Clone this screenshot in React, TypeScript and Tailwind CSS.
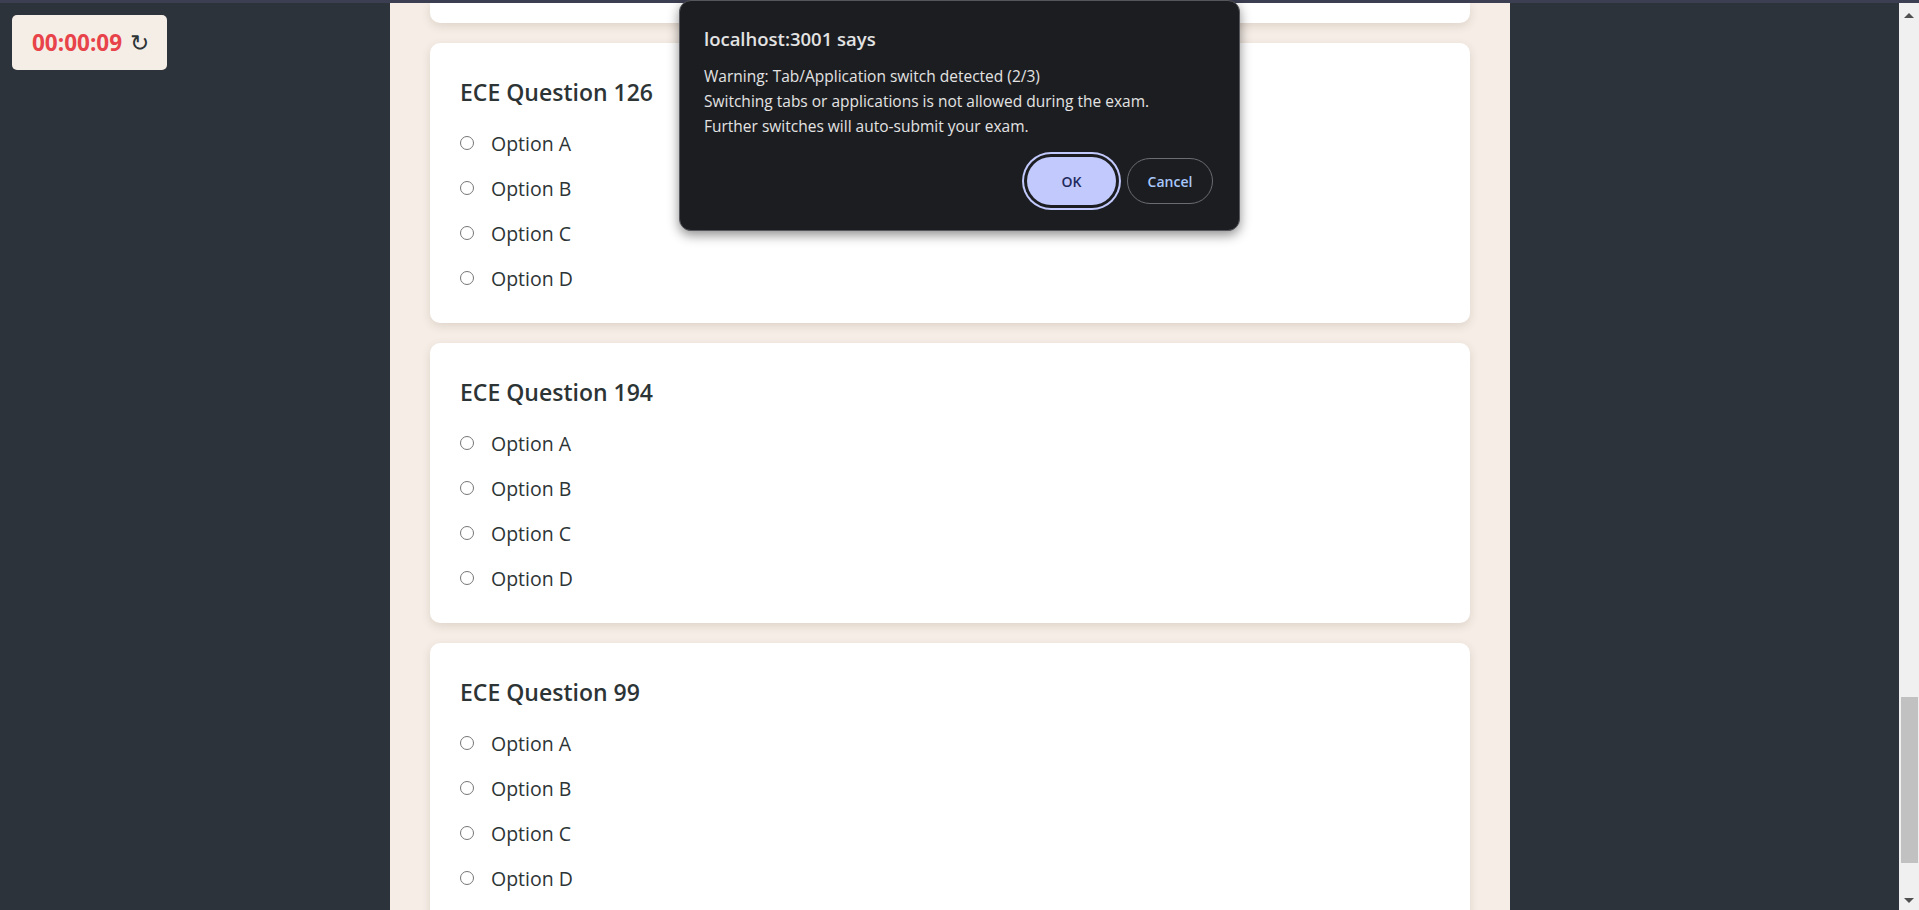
import React from 'react'

const questions = ['ECE Question 126', 'ECE Question 194', 'ECE Question 99']
const options = ['Option A', 'Option B', 'Option C', 'Option D']

const QuestionCard = ({ title }: { title: string }) => {
  return (
    <div className="shrink-0 h-[280px] rounded-[10px] bg-white px-[30px] pt-[29px] pb-[22px] shadow-[0_3px_8px_rgba(120,100,80,0.18)]">
      <h3 className="h-10 leading-10 text-[23px] font-semibold text-[#2d3436] mb-[9px]">{title}</h3>
      <div className="flex flex-col">
        {options.map((o) => (
          <label key={o} className="flex items-center h-[45px] gap-[17px]">
            <span className="w-[14px] h-[14px] rounded-full border border-[#767676] bg-white -mt-[2px]" />
            <span className="text-[19.5px] text-[#2d3436]">{o}</span>
          </label>
        ))}
      </div>
    </div>
  )
}

const Scrollbar = () => {
  return (
    <div className="w-[20px] shrink-0 bg-[#f0f0f0] flex flex-col items-center">
      <div className="mt-[10px] w-0 h-0 border-l-[5px] border-r-[5px] border-b-[5px] border-l-transparent border-r-transparent border-b-[#505050]" />
      <div className="mt-[679px] ml-[2px] mr-[1px] self-stretch h-[166px] bg-[#c1c1c1]" />
      <div className="mt-[35px] w-0 h-0 border-l-[5px] border-r-[5px] border-t-[5px] border-l-transparent border-r-transparent border-t-[#505050]" />
    </div>
  )
}

const App = () => {
  return (
    <div className="relative h-[910px] w-[1919px] overflow-hidden bg-[#2c333a] flex flex-col font-['Open_Sans',sans-serif]">
      <div className="h-[3px] shrink-0 bg-[#3c3e51]" />
      <div className="flex flex-1 min-h-0">
        <div className="w-[390px] shrink-0 pl-3 pt-3">
          <div className="w-[155px] h-[55px] rounded-[5px] bg-[#f5eee6] flex items-center pl-5 gap-2">
            <span className="text-[22.5px] font-bold text-[#e8434a]">00:00:09</span>
            <span className="text-[23px] text-[#2d3436]">↻</span>
          </div>
        </div>
        <main className="w-[1120px] shrink-0 bg-[#f5ede6] px-10 flex flex-col gap-5 overflow-hidden">
          {/* tail of the previous question, scrolled out of view */}
          <div className="shrink-0 h-5 rounded-b-[10px] bg-white shadow-[0_3px_8px_rgba(120,100,80,0.18)]" />
          {questions.map((q) => (
            <QuestionCard key={q} title={q} />
          ))}
        </main>
        <div className="flex-1" />
        <Scrollbar />
      </div>

      {/* browser alert */}
      <div className="absolute left-[679px] top-0 w-[561px] h-[231px] rounded-[12px] border border-[#55565b] bg-[#1c1d21] shadow-[0_4px_12px_rgba(0,0,0,0.45)] px-6 pt-[25px]">
        <div className="text-[18.5px] leading-[26px] font-semibold text-[#e3e3e3]">localhost:3001 says</div>
        <div className="mt-3 text-[15.5px] leading-[25px] text-[#e3e3e3]">
          <div>Warning: Tab/Application switch detected (2/3)</div>
          <div>Switching tabs or applications is not allowed during the exam.</div>
          <div>Further switches will auto-submit your exam.</div>
        </div>
        <div className="mt-[18px] flex justify-end items-center gap-[11px] pr-[2px]">
          <button className="w-[89px] h-[48px] rounded-full bg-[#c2c9fc] text-[#1e2a5e] text-[14px] font-semibold ring-2 ring-[#c2c9fc] ring-offset-[3px] ring-offset-[#1c1d21]">
            OK
          </button>
          <button className="w-[86px] h-[46px] rounded-full border border-[#6b6c72] text-[#a8c7fa] text-[14px] font-semibold">
            Cancel
          </button>
        </div>
      </div>
    </div>
  )
}

export default App
